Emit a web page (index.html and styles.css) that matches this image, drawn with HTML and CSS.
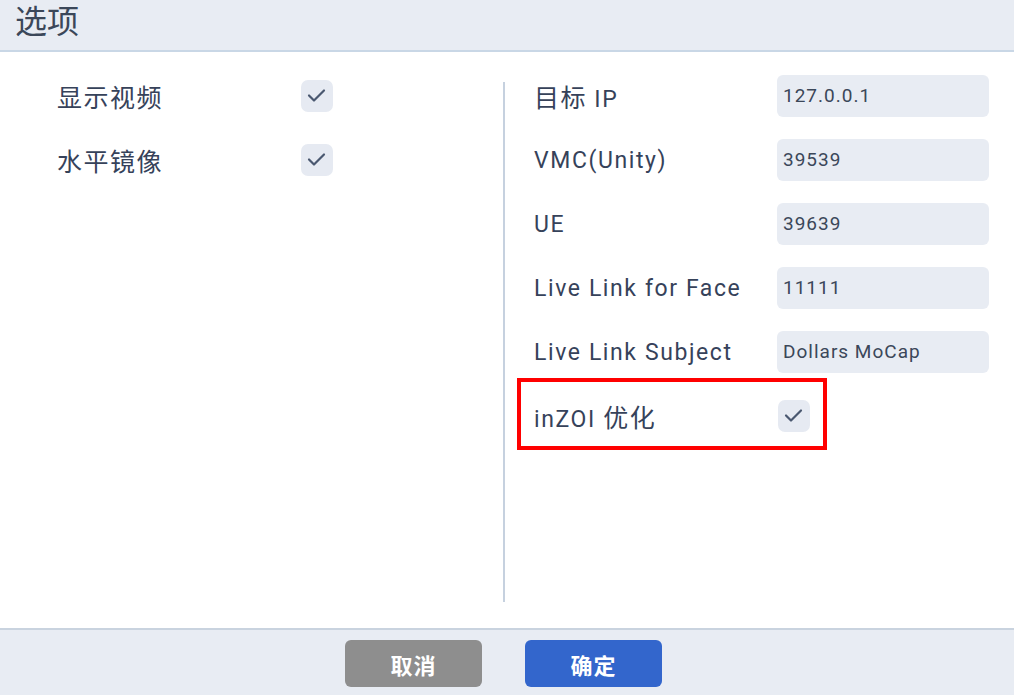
FILE: index.html
```html
<!DOCTYPE html>
<html lang="zh">
<head>
<meta charset="utf-8">
<link rel="stylesheet" href="styles.css">
</head>
<body>
<div class="dialog">
  <header class="header">选项</header>
  <main class="main">
    <section class="col col-left">
      <div class="row">
        <span class="label"><span class="cjk">显示视频</span></span>
        <span class="check"><svg viewBox="0 0 32 32" width="32" height="32"><polyline points="8,15.5 13,20.5 23,10.5" /></svg></span>
      </div>
      <div class="row">
        <span class="label"><span class="cjk">水平镜像</span></span>
        <span class="check"><svg viewBox="0 0 32 32" width="32" height="32"><polyline points="8,15.5 13,20.5 23,10.5" /></svg></span>
      </div>
    </section>
    <div class="divider"></div>
    <section class="col col-right">
      <div class="row">
        <span class="label"><span class="cjk">目标</span> IP</span>
        <span class="input">127.0.0.1</span>
      </div>
      <div class="row">
        <span class="label">VMC(Unity)</span>
        <span class="input">39539</span>
      </div>
      <div class="row">
        <span class="label">UE</span>
        <span class="input">39639</span>
      </div>
      <div class="row">
        <span class="label">Live Link for Face</span>
        <span class="input">11111</span>
      </div>
      <div class="row">
        <span class="label">Live Link Subject</span>
        <span class="input">Dollars MoCap</span>
      </div>
      <div class="row highlight">
        <span class="label">inZOI <span class="cjk">优化</span></span>
        <span class="check check-right"><svg viewBox="0 0 32 32" width="32" height="32"><polyline points="8,15.5 13,20.5 23,10.5" /></svg></span>
      </div>
    </section>
  </main>
  <footer class="footer">
    <button class="btn btn-cancel">取消</button>
    <button class="btn btn-ok">确定</button>
  </footer>
</div>
</body>
</html>
```

FILE: styles.css
```css
html, body {
  margin: 0;
  padding: 0;
  background: #ffffff;
}
body {
  font-family: Roboto, "Noto Sans CJK SC", sans-serif;
  color: #3b4759;
}
.dialog {
  width: 1014px;
  height: 695px;
  display: flex;
  flex-direction: column;
}
.header {
  height: 50px;
  flex: none;
  background: #e8ecf3;
  border-bottom: 2px solid #c9d7e6;
  font-size: 32px;
  line-height: 44px;
  padding-left: 15px;
  color: #3b4759;
}
.main {
  flex: 1;
  display: flex;
  padding-top: 12px;
  min-height: 0;
}
.col {
  display: flex;
  flex-direction: column;
}
.col-left {
  width: 333px;
  padding-left: 57px;
  box-sizing: border-box;
  margin-right: 170px;
}
.col-right {
  flex: 1;
  padding-left: 29px;
  padding-right: 25px;
}
.divider {
  width: 2px;
  background: #c6d1df;
  margin-top: 18px;
  margin-bottom: 26px;
  flex: none;
}
.row {
  height: 64px;
  display: flex;
  align-items: center;
  justify-content: space-between;
  position: relative;
}
.label {
  font-size: 23px;
  letter-spacing: 1.6px;
  color: #36425a;
}
.cjk {
  font-size: 25px;
  letter-spacing: 1.5px;
}
.check {
  width: 32px;
  height: 32px;
  border-radius: 7px;
  background: #e6eaf2;
  display: flex;
}
.check svg polyline {
  fill: none;
  stroke: #4a5870;
  stroke-width: 2.2;
  stroke-linecap: round;
  stroke-linejoin: round;
}
.col-right .row {
  justify-content: flex-start;
}
.col-right .label {
  width: 243px;
  flex: none;
}
.input {
  width: 212px;
  height: 42px;
  box-sizing: border-box;
  background: #e8ecf3;
  border-radius: 6px;
  padding-left: 6px;
  font-size: 19px;
  letter-spacing: 1px;
  line-height: 42px;
  color: #3b4759;
}
.check-right {
  margin-left: 1px;
}
.highlight::after {
  content: "";
  position: absolute;
  left: -17px;
  top: -6px;
  width: 310px;
  height: 72px;
  box-sizing: border-box;
  border: 4px solid #ff0000;
  pointer-events: none;
}
.footer {
  height: 67px;
  flex: none;
  background: #e8ecf3;
  border-top: 2px solid #c9d3df;
  box-sizing: border-box;
  display: flex;
  justify-content: center;
  align-items: flex-start;
  padding-top: 10px;
  padding-right: 7px;
  gap: 43px;
}
.btn {
  width: 137px;
  height: 47px;
  border: none;
  border-radius: 6px;
  color: #ffffff;
  font-family: Roboto, "Noto Sans CJK SC", sans-serif;
  font-size: 22px;
  font-weight: 700;
  letter-spacing: 1px;
  padding: 0;
}
.btn-cancel {
  background: #8e8e8e;
}
.btn-ok {
  background: #3366cc;
}
```
